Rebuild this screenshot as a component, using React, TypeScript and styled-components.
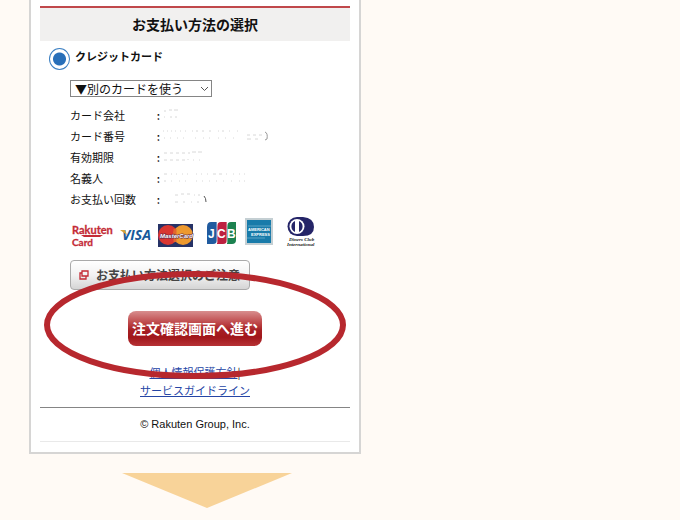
import React from "react";
import styled, { createGlobalStyle } from "styled-components";

const Global = createGlobalStyle`
  * { box-sizing: border-box; }
  body {
    margin: 0;
    background: #fffaf5;
    color: #111;
    font-family: "Noto Sans CJK JP", sans-serif;
    font-size: 11px;
    line-height: 21px;
  }
`;

const Page = styled.main`
  max-width: 390px;
  padding: 0 29px 12px;
`;

const Card = styled.section`
  position: relative;
  padding: 6px 9px 10px;
  background: #fff;
  border: 2px solid #d6d5d4;
  border-top: 0;
`;

const Title = styled.h1`
  margin: 0;
  border-top: 2px solid #c0484b;
  background: #f1f0ef;
  font-size: 14px;
  font-weight: 700;
  line-height: 33px;
  text-align: center;
`;

const Method = styled.label`
  display: flex;
  align-items: flex-start;
  gap: 5px;
  padding: 7px 0 0 9px;
  font-weight: 700;
  line-height: 17px;
`;

const Radio = styled.input`
  appearance: none;
  flex: none;
  width: 21px;
  height: 22px;
  margin: 0;
  border: 1px solid #3b7fc2;
  border-radius: 50%;
  background: radial-gradient(circle, #286fb9 6px, #fff 7px);
`;

const Details = styled.div`
  padding: 10px 0 0 30px;
`;

const CardSelect = styled.select`
  appearance: none;
  display: block;
  width: 142px;
  height: 17px;
  padding: 0 4px;
  border: 1px solid #858585;
  border-radius: 0;
  background: #fff;
  color: #111;
  font: 12px/15px "Noto Sans CJK JP", sans-serif;
`;

const SelectWrap = styled.div`
  position: relative;
  width: 142px;
`;

const Chevron = styled.svg`
  position: absolute;
  top: 6px;
  right: 3px;
  pointer-events: none;
`;

const Info = styled.dl`
  display: grid;
  grid-template-columns: 84px 1fr;
  margin: 8px 0 0;
`;

const Term = styled.dt``;

const Value = styled.dd`
  display: flex;
  align-items: center;
  margin: 0;
`;

const Colon = styled.span`
  width: 9px;
  font-weight: 500;
  text-align: center;
`;

const Logos = styled.div`
  display: flex;
  padding-top: 5px;
`;

const Drawing = styled.svg`
  display: block;
  flex: none;
`;

const NoticeButton = styled.button`
  display: flex;
  align-items: center;
  gap: 7px;
  height: 30px;
  margin-top: 11px;
  padding: 0 9px 0 8px;
  border: 1px solid #aaa;
  border-radius: 4px;
  background: linear-gradient(#fff, #f2f2f2 50%, #d5d5d5);
  color: #444;
  font: 700 12px/28px "Noto Sans CJK JP", sans-serif;
  white-space: nowrap;
`;

const SubmitButton = styled.button`
  display: block;
  height: 35px;
  margin: 21px auto 17px;
  padding: 0 4px;
  border: 0;
  border-radius: 8px;
  background: linear-gradient(#d88e8e, #bd4547 35%, #a61f23 55%, #a1171b 75%, #b63235);
  color: #fff;
  font: 700 14px/35px "Noto Sans CJK JP", sans-serif;
  white-space: nowrap;
`;

const Links = styled.nav`
  display: flex;
  flex-direction: column;
  align-items: center;
  padding-bottom: 8px;
  line-height: 18px;
`;

const TextLink = styled.a`
  color: #2545a5;
  text-decoration: underline;
  text-underline-offset: 1px;
`;

const Copyright = styled.footer`
  border-top: 1px solid #858585;
  border-bottom: 1px solid #e9e9e9;
  font-family: "Liberation Sans", sans-serif;
  line-height: 33px;
  text-align: center;
`;

const Ring = styled.svg`
  position: absolute;
  top: 268px;
  left: 12px;
  pointer-events: none;
`;

const Arrow = styled.svg`
  display: block;
  margin: 19px 0 0 93px;
`;

type Detail = { term: string; width: number; marks: string };

const details: Detail[] = [
  { term: "カード会社", width: 20, marks: "M1 2h2M6 1h3M11 1h4M1 8h1M7 8h2M12 8h2" },
  {
    term: "カード番号",
    width: 106,
    marks: "M0 1h1M4 1h1M8 1h1M12 1h1M17 1h1M22 1h1M29 1h1M33 1h2M39 1h2M46 1h2M55 1h1M59 1h2M66 1h1M74 1h1M84 5h3M90 5h3M96 5h3M1 8h1M7 8h1M14 8h1M20 8h1M32 8h1M40 8h1M46 8h1M55 8h1M62 8h1M70 8h1M84 9h4M92 9h3",
  },
  { term: "有効期限", width: 42, marks: "M1 2h3M7 2h3M13 2h3M19 2h3M26 1v2M29 1h4M35 1h4M1 9h3M7 9h3M13 9h3M19 9h3M25 8v1M30 9h1M36 9h1" },
  { term: "名義人", width: 86, marks: "M1 2h3M8 2h1M13 2h1M19 2h1M24 2h1M33 2h1M38 2h1M44 2h1M50 2h3M56 2h3M63 2h1M70 2h1M76 2h1M81 2h1M1 9h2M8 9h1M16 9h1M22 9h1M33 9h1M39 9h1M46 9h1M53 9h1M60 9h1M68 9h1M76 9h1M81 9h1" },
  { term: "お支払い回数", width: 46, marks: "M12 2h3M18 1h3M24 1h3M31 2h1M35 2h2M12 9h3M20 9h2M28 9h1M34 9h2" },
];

function Faded({ width, marks, term }: Detail) {
  return (
    <Drawing width={width} height="13" viewBox={`0 0 ${width} 13`} aria-hidden="true">
      <path d={marks} stroke="#d8d8d8" fill="none" />
      {term === "カード番号" && <path d="M102 2q3 1 2 7l-2 1" stroke="#999" fill="none" />}
      {term === "お支払い回数" && <path d="M41 3q2 2 2 6" stroke="#555" fill="none" />}
    </Drawing>
  );
}

function CardLogos() {
  return (
    <Drawing width="250" height="34" viewBox="70 215 250 34" role="img" aria-label="Rakuten Card, VISA, MasterCard, JCB, American Express, Diners Club International">
      <g fontFamily="Lato, sans-serif" fontWeight="700" fill="#c42b36" stroke="#c42b36" strokeWidth=".3">
        <text x="72" y="234" fontSize="11">Rakuten</text>
        <text x="72" y="246" fontSize="10">Card</text>
      </g>
      <path d="M81 235h22l-3 2H84z" fill="#c42b36" />

      <text x="122" y="240" fontFamily="Open Sans, sans-serif" fontSize="14" fontWeight="700" fontStyle="italic" fill="#17599b">VISA</text>
      <path d="M120 230h5l2 5z" fill="#d6a13a" />

      <path d="M158 224h35v23h-35z" fill="#263266" />
      <circle cx="168" cy="235" r="10" fill="#d93631" />
      <circle cx="183" cy="235" r="10" fill="#ed992e" />
      <path d="M175 229v13" stroke="#e2672e" strokeWidth="3" />
      <text x="160" y="238" fontFamily="Liberation Sans, sans-serif" fontSize="6" fontWeight="700" fontStyle="italic" fill="#fff" stroke="#59284b" strokeWidth="1" paintOrder="stroke">MasterCard</text>

      <path d="M211 222h6v18q0 4-4 4h-6v-17q0-5 4-5z" fill="#205b9f" />
      <path d="M221 222h6v18q0 4-4 4h-6v-17q0-5 4-5z" fill="#bd2140" />
      <path d="M231 222h5v18q0 4-4 4h-5v-17q0-5 4-5z" fill="#1c8250" />
      <path d="M217 222v21M227 222v21" stroke="#fff" strokeWidth=".7" />
      <g fontFamily="Liberation Sans, sans-serif" fontSize="12" fontWeight="700" fill="#fff">
        <text x="208" y="238">J</text>
        <text x="217" y="238">C</text>
        <text x="227" y="238">B</text>
      </g>

      <path d="M245 218h28v27h-28z" fill="#c4cfd3" />
      <path d="M247 220h24v23h-24z" fill="#187baa" />
      <path d="M248 226h23M247 238h18" stroke="#8ac1d8" strokeWidth=".6" />
      <g fontFamily="Liberation Sans, sans-serif" fontSize="4" fontWeight="700" fill="#fff">
        <text x="248" y="231">AMERICAN</text>
        <text x="251" y="236">EXPRESS</text>
      </g>

      <path d="M297 217h6q11 1 11 10t-11 9h-6z" fill="#252568" />
      <circle cx="297" cy="226.5" r="9.5" fill="#252568" />
      <circle cx="297" cy="226.5" r="7.5" fill="#fff" />
      <path d="M295 221a6 6 0 0 0 0 11zM299 221a6 6 0 0 1 0 11z" fill="#252568" />
      <g fontFamily="Liberation Serif, serif" fontSize="5" fontWeight="700" fontStyle="italic" fill="#222">
        <text x="289" y="241">Diners Club</text>
        <text x="287" y="246">International</text>
      </g>
    </Drawing>
  );
}

export default function App() {
  return (
    <>
      <Global />
      <Page>
        <Card>
          <Title>お支払い方法の選択</Title>
          <Method>
            <Radio type="radio" name="method" defaultChecked />
            クレジットカード
          </Method>
          <Details>
            <SelectWrap>
              <CardSelect aria-label="カード">
                <option>▼別のカードを使う</option>
              </CardSelect>
              <Chevron width="9" height="6" viewBox="0 0 9 6" aria-hidden="true">
                <path d="M1 1l3.5 3.5L8 1" fill="none" stroke="#555" />
              </Chevron>
            </SelectWrap>
            <Info>
              {details.map((item) => (
                <React.Fragment key={item.term}>
                  <Term>{item.term}</Term>
                  <Value>
                    <Colon>:</Colon>
                    <Faded {...item} />
                  </Value>
                </React.Fragment>
              ))}
            </Info>
            <Logos>
              <CardLogos />
            </Logos>
            <NoticeButton type="button">
              <Drawing width="10" height="10" viewBox="0 0 10 10" aria-hidden="true">
                <path d="M3 1h6v5H3zM3 3H1v6h6V6" fill="none" stroke="#c32832" strokeWidth="1.3" />
              </Drawing>
              お支払い方法選択のご注意
            </NoticeButton>
          </Details>
          <SubmitButton type="submit">注文確認画面へ進む</SubmitButton>
          <Links>
            <span>
              <TextLink href="#privacy">個人情報保護方針</TextLink>|
            </span>
            <TextLink href="#guideline">サービスガイドライン</TextLink>
          </Links>
          <Copyright>© Rakuten Group, Inc.</Copyright>
          <Ring width="304" height="112" viewBox="0 0 304 112" aria-hidden="true">
            <ellipse cx="152" cy="57" rx="148" ry="51" fill="none" stroke="#b7282e" strokeWidth="6" />
          </Ring>
        </Card>
        <Arrow width="170" height="35" viewBox="0 0 170 35" aria-hidden="true">
          <path d="M0 0h170L85 35z" fill="#f8d399" />
        </Arrow>
      </Page>
    </>
  );
}
